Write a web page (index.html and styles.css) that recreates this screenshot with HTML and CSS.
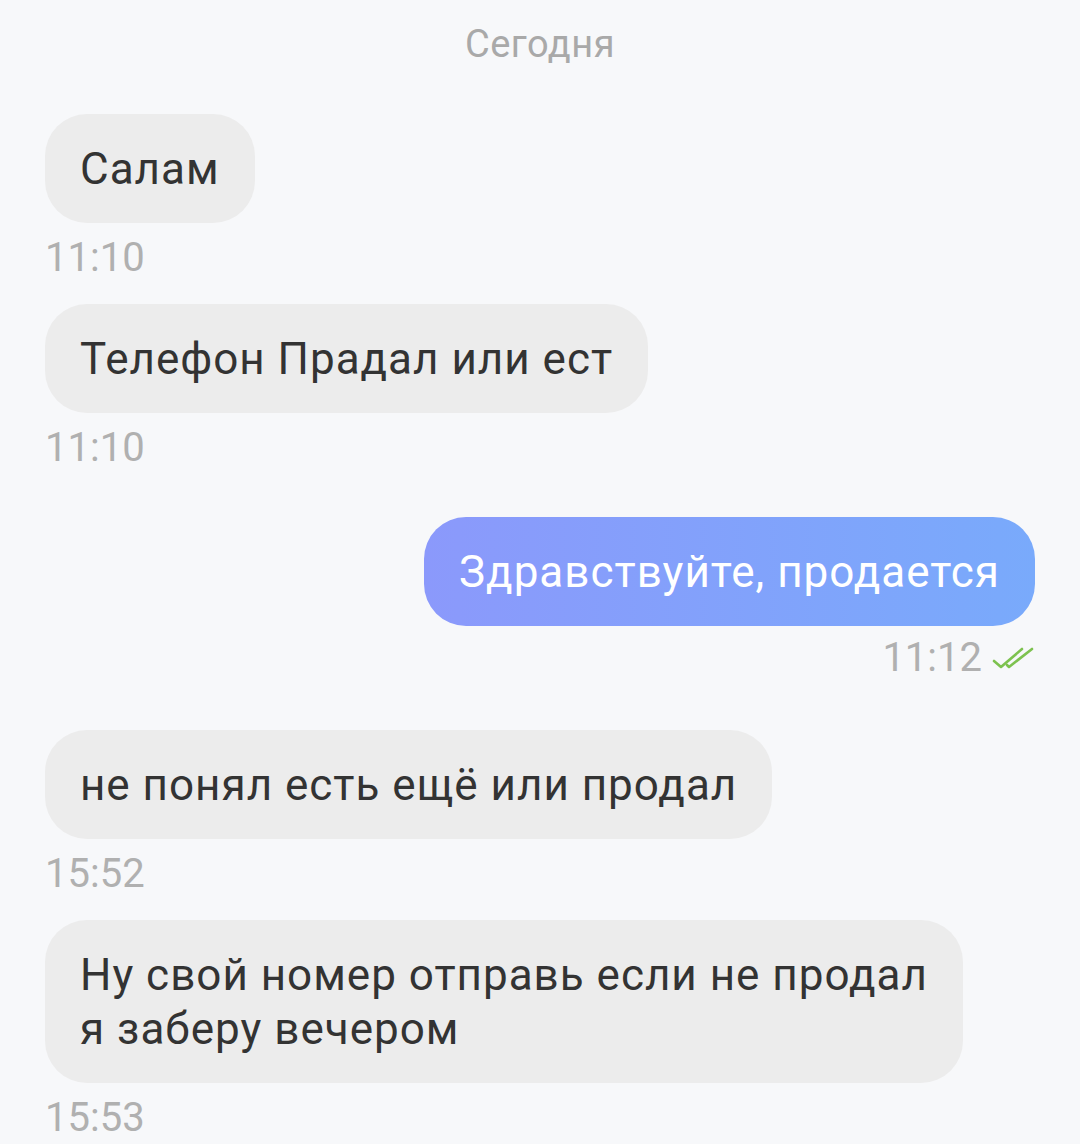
FILE: index.html
```html
<!DOCTYPE html>
<html lang="ru">
<head>
    <meta charset="UTF-8">
    <meta name="viewport" content="width=device-width, initial-scale=1.0">
    <title>Чат</title>
    <link rel="stylesheet" href="styles.css">
</head>
<body>
    <div class="chat">
        <div class="day">Сегодня</div>

        <div class="msg in">
            <div class="bubble">Салам</div>
            <div class="time">11:10</div>
        </div>

        <div class="msg in">
            <div class="bubble">Телефон Прадал или ест</div>
            <div class="time">11:10</div>
        </div>

        <div class="msg out">
            <div class="bubble">Здравствуйте, продается</div>
            <div class="time">11:12
                <svg class="read" width="42" height="24" viewBox="0 0 42 24">
                    <path d="M2 14 L9 20 L30 2" fill="none" stroke="#7dc24f" stroke-width="2.6" stroke-linecap="round" stroke-linejoin="round"/>
                    <path d="M15 18 L17 20 L40 2" fill="none" stroke="#7dc24f" stroke-width="2.6" stroke-linecap="round" stroke-linejoin="round"/>
                </svg>
            </div>
        </div>

        <div class="msg in">
            <div class="bubble">не понял есть ещё или продал</div>
            <div class="time">15:52</div>
        </div>

        <div class="msg in">
            <div class="bubble">Ну свой номер отправь если не продал<br>я заберу вечером</div>
            <div class="time">15:53</div>
        </div>
    </div>
</body>
</html>
```

FILE: styles.css
```css
body {
    margin: 0;
    background-color: #f7f8fa;
    font-family: Roboto, "Noto Sans", sans-serif;
}
.chat {
    display: flex;
    flex-direction: column;
    padding: 20px 45px 0 45px;
}
.day {
    text-align: center;
    color: #a9a9a9;
    font-size: 38px;
    letter-spacing: 0.5px;
    line-height: 48px;
    margin-bottom: 46px;
}
.msg {
    display: flex;
    flex-direction: column;
    align-items: flex-start;
    margin-bottom: 22px;
}
.msg.out {
    align-items: flex-end;
    margin-top: 23px;
    margin-bottom: 48px;
}
.bubble {
    background-color: #ececec;
    color: #333333;
    font-size: 44px;
    letter-spacing: 1px;
    line-height: 54px;
    padding: 27.5px 35px;
    border-radius: 42px;
}
.out .bubble {
    background: linear-gradient(90deg, #8b99fb, #79aafb);
    color: white;
}
.time {
    display: flex;
    align-items: center;
    gap: 10px;
    color: #b0b0b0;
    font-size: 40px;
    line-height: 48px;
    margin-top: 11px;
}
.out .time {
    margin-top: 8px;
    margin-right: 1px;
}
.read {
    margin-top: 2px;
}
```
